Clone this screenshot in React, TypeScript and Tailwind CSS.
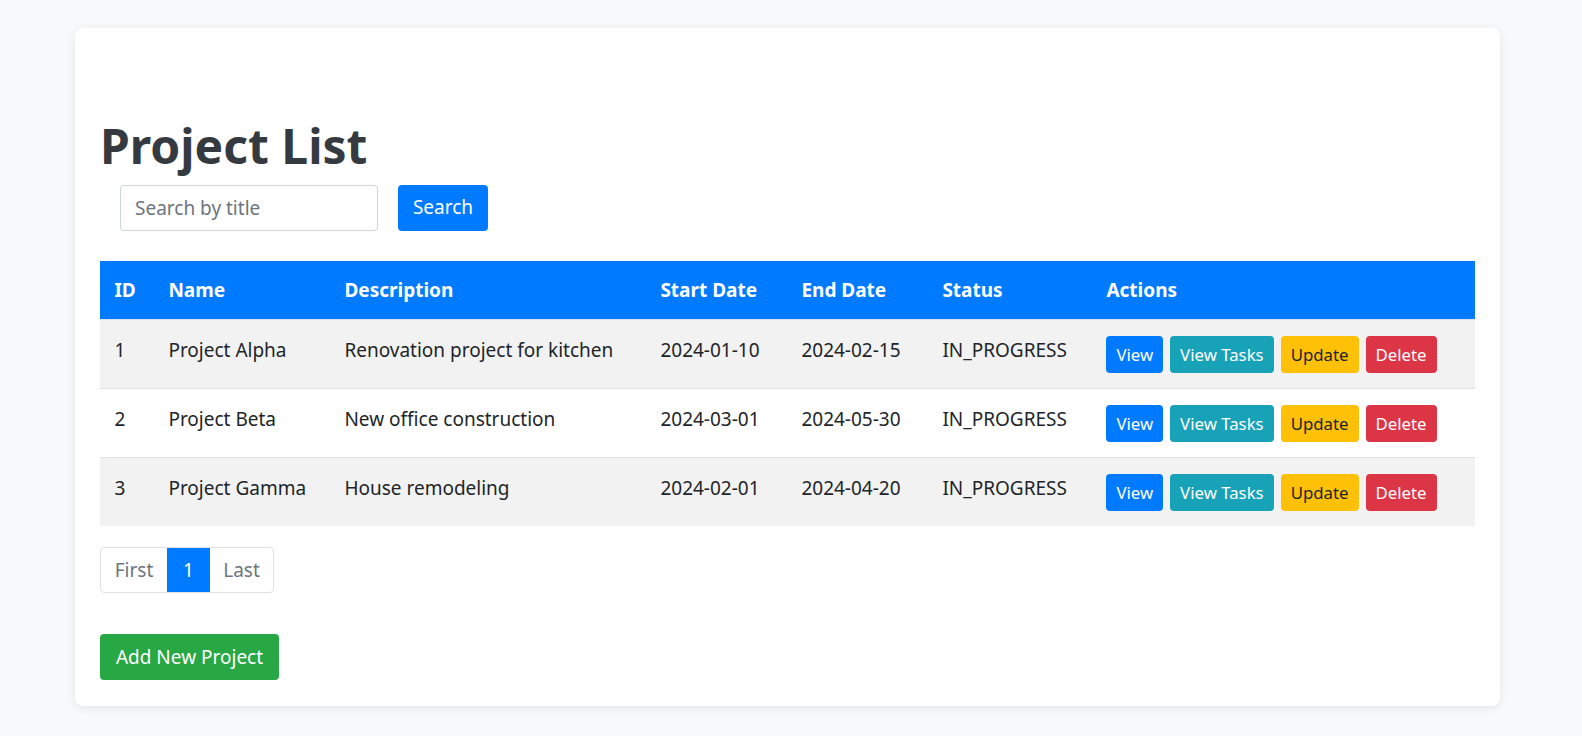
const projects = [
  { id: 1, name: "Project Alpha", description: "Renovation project for kitchen", start: "2024-01-10", end: "2024-02-15", status: "IN_PROGRESS" },
  { id: 2, name: "Project Beta", description: "New office construction", start: "2024-03-01", end: "2024-05-30", status: "IN_PROGRESS" },
  { id: 3, name: "Project Gamma", description: "House remodeling", start: "2024-02-01", end: "2024-04-20", status: "IN_PROGRESS" },
];

export default function App() {
  return (
    <div className="min-h-screen bg-[#f8f9fa] pt-[28px] pl-[75px] font-['Noto_Sans',sans-serif] text-[#212529]">
      <div className="w-[1425px] rounded-lg bg-white px-[25px] pt-[89px] pb-[26px] shadow-[0_2px_10px_rgba(0,0,0,0.08)]">
        <h1 className="text-[48px] font-bold leading-[1.2] text-[#343a40] mb-[10px]">Project List</h1>

        {/* search */}
        <div className="flex items-center gap-[20px] pl-[20px]">
          <input
            type="text"
            placeholder="Search by title"
            className="h-[46px] w-[258px] rounded-[4px] border border-[#ced4da] px-[14px] text-[19px] text-[#495057] placeholder:text-[#6c757d] outline-none"
          />
          <button className="h-[46px] w-[90px] rounded-[4px] bg-[#007bff] text-[19px] text-white">Search</button>
        </div>

        <table className="mt-[30px] w-full border-collapse text-[19px] leading-[28.8px]">
          <thead>
            <tr className="bg-[#007bff] text-left text-white">
              <th className="w-[54px] px-[14.4px] pt-[15.5px] pb-[14.4px] font-bold">ID</th>
              <th className="w-[176px] px-[14.4px] pt-[15.5px] pb-[14.4px] font-bold">Name</th>
              <th className="w-[316px] px-[14.4px] pt-[15.5px] pb-[14.4px] font-bold">Description</th>
              <th className="w-[141px] px-[14.4px] pt-[15.5px] pb-[14.4px] font-bold">Start Date</th>
              <th className="w-[141px] px-[14.4px] pt-[15.5px] pb-[14.4px] font-bold">End Date</th>
              <th className="w-[164px] px-[14.4px] pt-[15.5px] pb-[14.4px] font-bold">Status</th>
              <th className="px-[14.4px] pt-[15.5px] pb-[14.4px] font-bold">Actions</th>
            </tr>
          </thead>
          <tbody>
            {projects.map((p, i) => (
              <tr key={p.id} className={`border-t border-[#dee2e6] ${i % 2 === 0 ? "bg-[#f2f2f2]" : "bg-white"}`}>
                <td className="px-[14.4px] pt-[16px] align-top">{p.id}</td>
                <td className="px-[14.4px] pt-[16px] align-top">{p.name}</td>
                <td className="px-[14.4px] pt-[16px] align-top">{p.description}</td>
                <td className="px-[14.4px] pt-[16px] align-top">{p.start}</td>
                <td className="px-[14.4px] pt-[16px] align-top">{p.end}</td>
                <td className="px-[14.4px] pt-[16px] align-top">{p.status}</td>
                <td className="px-[14.4px] pt-[16px] pb-[15px] align-top">
                  <div className="flex gap-[7px] text-[16.8px] leading-[25px]">
                    <button className="h-[37px] rounded-[4px] bg-[#007bff] px-[10px] text-white">View</button>
                    <button className="h-[37px] rounded-[4px] bg-[#17a2b8] px-[10px] text-white">View Tasks</button>
                    <button className="h-[37px] rounded-[4px] bg-[#ffc107] px-[10px] text-[#212529]">Update</button>
                    <button className="h-[37px] rounded-[4px] bg-[#dc3545] px-[10px] text-white">Delete</button>
                  </div>
                </td>
              </tr>
            ))}
          </tbody>
        </table>

        {/* pagination */}
        <div className="mt-[21px] flex">
          <div className="flex h-[46px] overflow-hidden rounded-[4px] border border-[#dee2e6] text-[19px]">
            <button className="w-[66px] text-[#6c757d]">First</button>
            <button className="w-[43px] bg-[#007bff] text-white">1</button>
            <button className="w-[63px] text-[#6c757d]">Last</button>
          </div>
        </div>

        <button className="mt-[41px] h-[46px] w-[179px] rounded-[4px] bg-[#28a745] text-[19px] text-white">Add New Project</button>
      </div>
    </div>
  );
}
